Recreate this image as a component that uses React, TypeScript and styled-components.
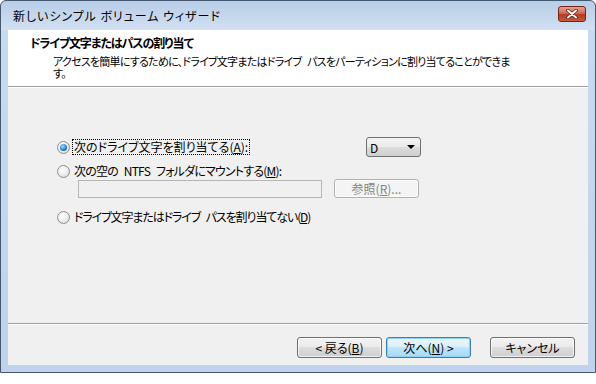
import React from 'react';
import styled, { createGlobalStyle } from 'styled-components';

const GlobalStyle = createGlobalStyle`
  body {
    margin: 0;
    background: #ffffff;
    font-family: "Noto Sans CJK JP", "Noto Sans", sans-serif;
    font-size: 12px;
    font-feature-settings: "palt";
    color: #000000;
  }
`;

const Window = styled.div`
  width: 596px;
  height: 373px;
  box-sizing: border-box;
  border: 1px solid #44586f;
  border-radius: 6px 6px 0 0;
  padding: 0 7px 7px;
  display: flex;
  flex-direction: column;
  background: linear-gradient(#b8cde8 0, #d2e0f2 29px, #c8daef 29px, #bfd3ec 100%);
`;

const TitleBar = styled.div`
  height: 29px;
  display: flex;
  align-items: center;
  justify-content: space-between;
  padding: 0 2px 0 5px;
`;

const TitleText = styled.div`
  line-height: 14px;
  color: #000000;
  letter-spacing: 0.95px;
`;

const CloseButton = styled.div`
  width: 28px;
  height: 16px;
  box-sizing: border-box;
  border: 1px solid #6d2419;
  border-radius: 3px;
  display: flex;
  align-items: center;
  justify-content: center;
  margin-top: -4px;
  background: linear-gradient(#e8a08f 0, #d26a52 45%, #b63a21 55%, #c95a3c 100%);
`;

const Client = styled.div`
  flex: 1;
  display: flex;
  flex-direction: column;
  background: #f0f0f0;
`;

const Header = styled.div`
  height: 57px;
  box-sizing: border-box;
  background: #ffffff;
  padding: 6px 0 0 22px;
  border-bottom: 1px solid #a0a0a0;
  box-shadow: 0 1px 0 #ffffff;
`;

const HeaderTitle = styled.div`
  font-weight: bold;
  line-height: 14px;
  letter-spacing: -1.1px;
`;

const HeaderDesc = styled.div`
  margin: 5px 0 0 23px;
  font-size: 11px;
  line-height: 12px;
  letter-spacing: -0.75px;
  word-spacing: 4px;
  white-space: nowrap;
`;

const Body = styled.div`
  flex: 1;
  padding: 50px 0 0 49px;
  display: flex;
  flex-direction: column;
`;

const OptionRow = styled.div<{ $height: number; $gap: number }>`
  width: 364px;
  height: ${(p) => p.$height}px;
  margin-top: ${(p) => p.$gap}px;
  display: flex;
  align-items: center;
  justify-content: space-between;
`;

const RadioLabel = styled.label`
  display: flex;
  align-items: center;
  gap: 3px;
  white-space: nowrap;
`;

const Radio = styled.span<{ $checked?: boolean }>`
  width: 13px;
  height: 13px;
  box-sizing: border-box;
  border-radius: 50%;
  border: 1px solid #8f8f8f;
  background: radial-gradient(circle at 40% 35%, #ffffff 0, #eaeaea 55%, #d2d2d2 100%);
  display: flex;
  align-items: center;
  justify-content: center;

  &::after {
    content: '';
    display: ${(p) => (p.$checked ? 'block' : 'none')};
    width: 7px;
    height: 7px;
    border-radius: 50%;
    background: radial-gradient(circle at 40% 35%, #a8e0ff 0, #2f8ad6 50%, #0b4a8c 100%);
  }
`;

const LabelText = styled.span<{ $focused?: boolean; $spacing?: number }>`
  line-height: 14px;
  padding: 0 1px;
  letter-spacing: ${(p) => p.$spacing ?? 0}px;
  word-spacing: ${(p) => (p.$spacing ? 4 : 0)}px;
  outline: ${(p) => (p.$focused ? '1px dotted #000000' : 'none')};
`;

const Mnemonic = styled.u`
  text-underline-offset: 1px;
`;

const Combo = styled.div`
  width: 55px;
  height: 20px;
  box-sizing: border-box;
  border: 1px solid #707070;
  border-radius: 3px;
  padding: 0 5px 0 3px;
  display: flex;
  align-items: center;
  justify-content: space-between;
  background: linear-gradient(#f2f2f2 0, #ebebeb 50%, #dddddd 50%, #cfcfcf 100%);
`;

const Arrow = styled.span`
  width: 0;
  height: 0;
  border-left: 4px solid transparent;
  border-right: 4px solid transparent;
  border-top: 4px solid #000000;
`;

const FieldRow = styled.div`
  display: flex;
  gap: 12px;
  margin: 0 0 0 21px;
  height: 19px;
`;

const TextField = styled.div`
  width: 244px;
  height: 18px;
  margin-top: 1px;
  box-sizing: border-box;
  border: 1px solid #b5b5b5;
  background: #f0f0f0;
`;

const Button = styled.div<{ $default?: boolean; $disabled?: boolean; $height?: number }>`
  width: 85px;
  height: ${(p) => p.$height ?? 21}px;
  box-sizing: border-box;
  border: 1px solid ${(p) => (p.$disabled ? '#adb2b5' : p.$default ? '#3c7fb1' : '#707070')};
  border-radius: 3px;
  display: flex;
  align-items: center;
  justify-content: center;
  white-space: nowrap;
  color: ${(p) => (p.$disabled ? '#838383' : '#000000')};
  background: ${(p) =>
    p.$disabled
      ? '#f4f4f4'
      : p.$default
        ? 'linear-gradient(#eaf6fd 0, #d9f0fc 50%, #bee6fd 50%, #a7d9f5 100%)'
        : 'linear-gradient(#f2f2f2 0, #ebebeb 50%, #dddddd 50%, #cfcfcf 100%)'};
  box-shadow: ${(p) => (p.$default ? 'inset 0 0 0 1px #8ed0f6' : 'inset 0 0 0 1px rgba(255,255,255,0.7)')};
`;

const Footer = styled.div`
  height: 42px;
  box-sizing: border-box;
  border-top: 1px solid #a0a0a0;
  box-shadow: inset 0 1px 0 #ffffff;
  padding: 13px 13px 0 0;
  display: flex;
  justify-content: flex-end;
  gap: 4px;
`;

const CancelGap = styled.div`
  width: 11px;
`;

export default function App() {
  return (
    <>
      <GlobalStyle />
      <Window>
        <TitleBar>
          <TitleText>新しいシンプル ボリューム ウィザード</TitleText>
          <CloseButton>
            <svg width="12" height="10" viewBox="0 0 12 10">
              <path d="M2 1.5 L10 8.5 M10 1.5 L2 8.5" stroke="#5a1a10" strokeWidth="3.6" strokeLinecap="round" />
              <path d="M2 1.5 L10 8.5 M10 1.5 L2 8.5" stroke="#ffffff" strokeWidth="2" strokeLinecap="round" />
            </svg>
          </CloseButton>
        </TitleBar>
        <Client>
          <Header>
            <HeaderTitle>ドライブ文字またはパスの割り当て</HeaderTitle>
            <HeaderDesc>
              アクセスを簡単にするために、ドライブ文字またはドライブ パスをパーティションに割り当てることができま
              <br />
              す。
            </HeaderDesc>
          </Header>
          <Body>
            <OptionRow $height={20} $gap={0}>
              <RadioLabel>
                <Radio $checked />
                <LabelText $focused>
                  次のドライブ文字を割り当てる(<Mnemonic>A</Mnemonic>):
                </LabelText>
              </RadioLabel>
              <Combo>
                <span>D</span>
                <Arrow />
              </Combo>
            </OptionRow>
            <OptionRow $height={16} $gap={6}>
              <RadioLabel>
                <Radio />
                <LabelText $spacing={-0.8}>
                  次の空の NTFS フォルダにマウントする(<Mnemonic>M</Mnemonic>):
                </LabelText>
              </RadioLabel>
            </OptionRow>
            <FieldRow>
              <TextField />
              <Button $disabled $height={19}>
                参照(<Mnemonic>R</Mnemonic>)...
              </Button>
            </FieldRow>
            <OptionRow $height={16} $gap={11}>
              <RadioLabel>
                <Radio />
                <LabelText $spacing={-1.1}>
                  ドライブ文字またはドライブ パスを割り当てない(<Mnemonic>D</Mnemonic>)
                </LabelText>
              </RadioLabel>
            </OptionRow>
          </Body>
          <Footer>
            <Button>
              &lt; 戻る(<Mnemonic>B</Mnemonic>)
            </Button>
            <Button $default>
              次へ(<Mnemonic>N</Mnemonic>) &gt;
            </Button>
            <CancelGap />
            <Button>キャンセル</Button>
          </Footer>
        </Client>
      </Window>
    </>
  );
}
